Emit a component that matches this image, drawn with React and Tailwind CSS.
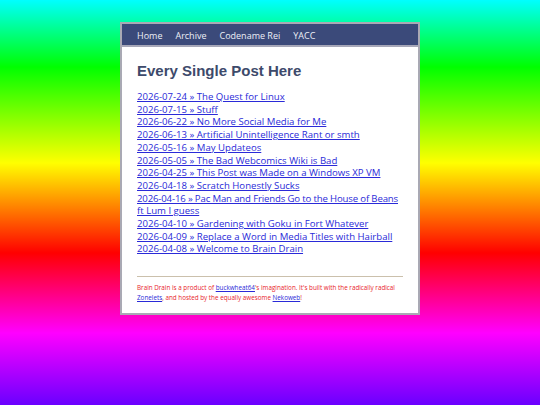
import React from "react";

const posts = [
  ["2026-07-24 » The Quest for Linux"],
  ["2026-07-15 » Stuff"],
  ["2026-06-22 » No More Social Media for Me"],
  ["2026-06-13 » Artificial Unintelligence Rant or smth"],
  ["2026-05-16 » May Updateos"],
  ["2026-05-05 » The Bad Webcomics Wiki is Bad"],
  ["2026-04-25 » This Post was Made on a Windows XP VM"],
  ["2026-04-18 » Scratch Honestly Sucks"],
  ["2026-04-16 » Pac Man and Friends Go to the House of Beans", "ft Lum I guess"],
  ["2026-04-10 » Gardening with Goku in Fort Whatever"],
  ["2026-04-09 » Replace a Word in Media Titles with Hairball"],
  ["2026-04-08 » Welcome to Brain Drain"],
];

const comic = "font-['Comic_Sans_MS','Open_Sans',sans-serif]";

export default function App() {
  return (
    <div className="h-[405px] w-full overflow-hidden pt-[22px] bg-[linear-gradient(to_bottom,#00ffff_0px,#00ff00_67px,#ffff00_163px,#ff0000_253px,#ff00ff_333px,#6a00ff_405px)]">
      <div className="mx-auto w-[300px] border-2 border-[#a9a9b4] bg-white">
        <nav className={`flex h-[23px] items-center gap-[13px] border-b-2 border-[#a6a7b8] bg-[#3b4a7a] pl-[15px] pt-[3px] text-[9px] text-[#eceef6] ${comic}`}>
          <span>Home</span>
          <span>Archive</span>
          <span>Codename Rei</span>
          <span>YACC</span>
        </nav>
        <div className="px-[15px] pb-[10px]">
          <h1 className="mt-[15px] font-['Liberation_Sans',Arial,sans-serif] text-[15px] font-bold leading-[17px] text-[#3d4a6b]">
            Every Single Post Here
          </h1>
          <ul className={`mt-[12px] text-[9.6px] leading-[12.7px] ${comic}`}>
            {posts.map((p) => (
              <li key={p[0]}>
                <a href="#" className="text-[#2a2ad8] underline">
                  {p.length > 1 ? (
                    <>
                      <span className="whitespace-nowrap tracking-[-0.15px]">{p[0]}</span>
                      <br />
                      {p[1]}
                    </>
                  ) : (
                    p[0]
                  )}
                </a>
              </li>
            ))}
          </ul>
          <hr className="mt-[20px] border-t border-[#cbc0ac]" />
          <p className={`mt-[6px] whitespace-nowrap text-[6.3px] leading-[10px] text-[#e8242c] ${comic}`}>
            Brain Drain is a product of{" "}
            <a href="#" className="text-[#2a2ad8] underline">buckwheat64</a>'s imagination. It's built with the radically radical
            <br />
            <a href="#" className="text-[#2a2ad8] underline">Zonelets</a>, and hosted by the equally awesome{" "}
            <a href="#" className="text-[#2a2ad8] underline">Nekoweb</a>!
          </p>
        </div>
      </div>
    </div>
  );
}
